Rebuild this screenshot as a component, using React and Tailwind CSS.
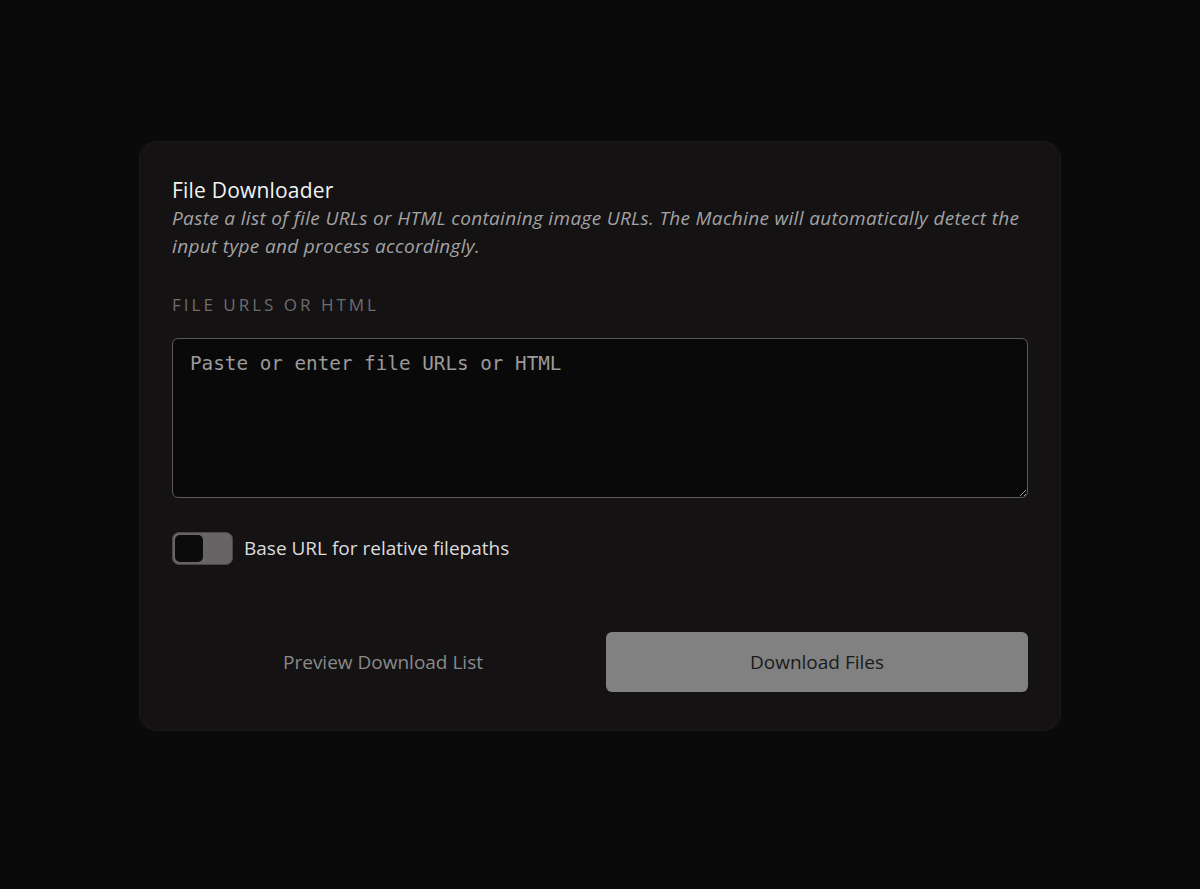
export default function App() {
  return (
    <div className="min-h-[889px] w-full bg-[#0a0a0a] flex justify-center pt-[141px]" style={{ fontFamily: '"Open Sans", "Noto Sans", sans-serif' }}>
      <div className="w-[922px] h-[590px] rounded-[18px] bg-[#141213] border border-[#1c1b1c] px-[32px] pt-[34px] flex flex-col">
        <h1 className="text-[21px] leading-[28px] text-[#f2f2f2] tracking-[0.2px]">File Downloader</h1>
        <p className="text-[19px] leading-[28px] italic text-[#a3a3a3] tracking-[0.33px]">
          Paste a list of file URLs or HTML containing image URLs. The Machine will automatically detect the input type and process accordingly.
        </p>
        <label className="mt-[33px] text-[17px] leading-[24px] tracking-[3px] text-[#6e6c6d] uppercase">File URLs or HTML</label>
        <textarea
          className="mt-[21px] h-[160px] w-full rounded-[6px] border border-[#5a5859] bg-[#0a0909] px-[17px] py-[12px] text-[19.3px] leading-[26px] text-[#e5e5e5] placeholder:text-[#9a9a9a] outline-none"
          style={{ fontFamily: '"DejaVu Sans Mono", "Liberation Mono", monospace' }}
          placeholder="Paste or enter file URLs or HTML"
        />
        <div className="mt-[34px] flex items-center gap-[11px]">
          <div className="w-[61px] h-[33px] rounded-[7px] bg-[#686465] border border-[#4a4748] p-[2px] flex">
            <div className="w-[28px] h-full rounded-[5px] bg-[#0c0b0b]" />
          </div>
          <span className="text-[19px] text-[#dcdcdc]">Base URL for relative filepaths</span>
        </div>
        <div className="mt-[67px] grid grid-cols-2 gap-[12px]">
          <button className="h-[60px] rounded-[6px] text-[19px] text-[#8a8a8a]">Preview Download List</button>
          <button className="h-[60px] rounded-[6px] bg-[#818181] text-[19px] text-[#1a1a1a]">Download Files</button>
        </div>
      </div>
    </div>
  );
}
